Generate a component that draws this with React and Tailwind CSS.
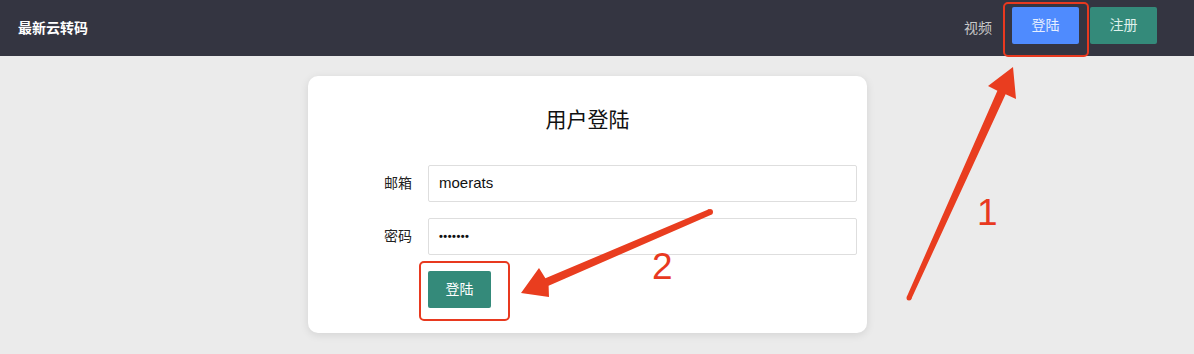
import React from "react";

const font = { fontFamily: '"Liberation Sans", "Noto Sans CJK SC", sans-serif' };

function Navbar() {
    return (
        <div className="h-[56px] bg-[#343541] flex items-center justify-between pl-[18px] pr-[37px]">
            <div className="text-white text-[14px] font-bold">最新云转码</div>
            <div className="flex items-center mb-[5px]">
                <a className="text-[#c8c8c8] text-[14px] mr-[20px] mt-[6px]">视频</a>
                <button className="w-[67px] h-[37px] rounded-[2px] bg-[#4f8bfe] text-[#e6eeff] text-[14px]">登陆</button>
                <button className="w-[67px] h-[37px] rounded-[2px] bg-[#348a7a] text-[#dff0ec] text-[14px] ml-[11px]">注册</button>
            </div>
        </div>
    );
}

function Field({ label, children }) {
    return (
        <div className="flex items-center">
            <label className="w-[120px] pr-[16px] text-right text-[14px] text-[#222]">{label}</label>
            <div className="w-[429px] h-[37px] border border-[#dedede] rounded-[2px] flex items-center pl-[10px] text-[15px] text-[#111]">
                {children}
            </div>
        </div>
    );
}

function LoginCard() {
    return (
        <div className="ml-[308px] w-[559px] h-[257px] bg-white rounded-[10px] shadow-[0_2px_8px_rgba(0,0,0,0.10)] pt-[30px]">
            <h2 className="text-center text-[21px] leading-[28px] text-[#111]">用户登陆</h2>
            <div className="mt-[31px] flex flex-col gap-[16px]">
                <Field label="邮箱">moerats</Field>
                <Field label="密码">
                    <span className="text-[11px] tracking-[0.5px] font-bold">•••••••</span>
                </Field>
                <div className="pl-[120px]">
                    <button className="w-[63px] h-[37px] rounded-[2px] bg-[#348a7a] text-white text-[14px]">登陆</button>
                </div>
            </div>
        </div>
    );
}

function Annotations() {
    return (
        <div className="absolute inset-0 pointer-events-none">
            <div className="absolute left-[1003px] top-[2px] w-[86px] h-[55px] border-2 border-[#e8391f] rounded-[5px]" />
            <div className="absolute left-[419px] top-[261px] w-[91px] h-[60px] border-2 border-[#e8391f] rounded-[5px]" />
            <svg className="absolute left-0 top-0" width="1194" height="354">
                <polygon
                    fill="#e93d1f"
                    points="1013,67 988,86 997.4,90.7 906.7,297 911.3,299 1005.6,94.3 1016,99"
                />
                <circle cx="909" cy="298" r="2.5" fill="#e93d1f" />
                <polygon
                    fill="#e93d1f"
                    points="521,293 539,268 545.4,278.3 708.8,209.2 711.2,214.8 548.6,285.7 549,297"
                />
                <circle cx="710" cy="212" r="3" fill="#e93d1f" />
            </svg>
            <span className="absolute left-[977px] top-[193px] text-[37px] leading-[40px] text-[#e8391f] font-light">1</span>
            <span className="absolute left-[652px] top-[247px] text-[37px] leading-[40px] text-[#e8391f] font-light">2</span>
        </div>
    );
}

export default function App() {
    return (
        <div className="relative w-[1194px] h-[354px] bg-[#ebebeb] overflow-hidden" style={font}>
            <Navbar />
            <div className="pt-[20px]">
                <LoginCard />
            </div>
            <Annotations />
        </div>
    );
}
